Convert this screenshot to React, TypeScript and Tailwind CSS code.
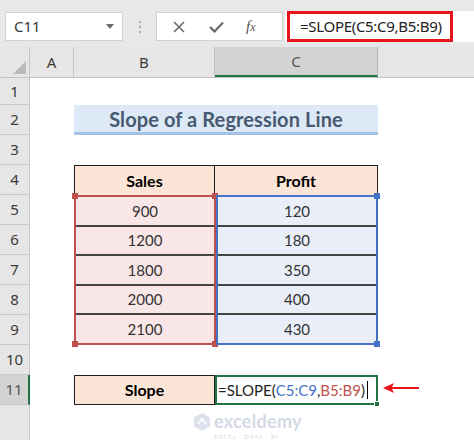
import React from "react";

const rowHeads: { n: string; h: string; sel?: boolean }[] = [
  { n: "1", h: "h-[27px]" },
  { n: "2", h: "h-[30px]" },
  { n: "3", h: "h-[30px]" },
  { n: "4", h: "h-[30px]" },
  { n: "5", h: "h-[30px]" },
  { n: "6", h: "h-[30px]" },
  { n: "7", h: "h-[30px]" },
  { n: "8", h: "h-[30px]" },
  { n: "9", h: "h-[30px]" },
  { n: "10", h: "h-[30px]" },
  { n: "11", h: "h-[30px]", sel: true },
  { n: "", h: "h-[40px]" },
];

const sales = ["900", "1200", "1800", "2000", "2100"];
const profit = ["120", "180", "350", "400", "430"];

function Handle({ pos, color }: { pos: string; color: string }) {
  return <div className={`absolute w-[6px] h-[6px] ${pos} ${color}`} />;
}

export default function App() {
  return (
    <div className="w-[474px] h-[440px] overflow-hidden bg-white font-[Lato,'Noto_Sans',sans-serif] text-[#333]">
      {/* Top formula bar */}
      <div className="h-[47px] bg-[#e8e8e8] flex items-start pt-[12px]">
        <div className="ml-[5px] w-[118px] h-[29px] bg-white border border-[#d2d2d2] flex items-center pl-[8px] pr-[8px]">
          <span className="text-[15px] text-[#3a3a3a] font-['Noto_Sans',sans-serif]">C11</span>
          <div className="ml-auto w-0 h-0 border-l-[4px] border-r-[4px] border-t-[5px] border-l-transparent border-r-transparent border-t-[#6b6b6b]" />
        </div>
        <div className="ml-[16px] mt-[9px] flex flex-col gap-[3px]">
          <div className="w-[2px] h-[2px] bg-[#a9a9a9]" />
          <div className="w-[2px] h-[2px] bg-[#a9a9a9]" />
          <div className="w-[2px] h-[2px] bg-[#a9a9a9]" />
        </div>
        <div className="ml-[15px] w-[127px] h-[29px] bg-white border border-[#d2d2d2] flex items-center">
          <svg className="ml-[16px]" width="12" height="12" viewBox="0 0 12 12">
            <path d="M1 1 L11 11 M11 1 L1 11" stroke="#6a6a6a" strokeWidth="1.6" />
          </svg>
          <svg className="ml-[24px]" width="15" height="12" viewBox="0 0 15 12">
            <path d="M1 6 L5.5 10.5 L14 1.5" stroke="#6a6a6a" strokeWidth="2.2" fill="none" />
          </svg>
          <span className="ml-[22px] text-[15px] italic text-[#555] font-['Liberation_Serif',serif] leading-none">
            f<span className="text-[12px]">x</span>
          </span>
        </div>
        <div className="flex-1 h-[31px] -mt-[1px] ml-[2px] bg-white flex items-center">
          <div className="ml-[2px] w-[166px] h-[31px] border-[3px] border-[#e8141b] flex items-center pl-[10px]">
            <span className="text-[15px] text-[#222] font-['Noto_Sans',sans-serif] tracking-[-0.3px]">
              =SLOPE(C5:C9,B5:B9)
            </span>
          </div>
        </div>
      </div>

      {/* Column headers */}
      <div className="h-[31px] flex bg-[#e6e6e6] border-b border-[#c4c4c4] text-[15px] text-[#3a3a3a] font-['Noto_Sans',sans-serif]">
        <div className="w-[30px] border-r border-[#c4c4c4] flex items-end justify-end p-[3px]">
          <div className="w-0 h-0 border-b-[13px] border-l-[13px] border-b-[#b9b9b9] border-l-transparent" />
        </div>
        <div className="w-[44px] border-r border-[#c4c4c4] flex items-center justify-center">A</div>
        <div className="w-[141px] border-r border-[#c4c4c4] flex items-center justify-center">B</div>
        <div className="w-[163px] bg-[#d3d3d3] border-r border-[#b5b5b5] border-b-2 border-b-[#217346] flex items-center justify-center text-[#555]">
          C
        </div>
        <div className="flex-1" />
      </div>

      <div className="flex">
        {/* Row headers */}
        <div className="w-[30px] flex flex-col text-[15px] text-[#3a3a3a] font-['Noto_Sans',sans-serif]">
          {rowHeads.map((r, i) =>
            r.sel ? (
              <div
                key={i}
                className={`${r.h} bg-[#d3d3d3] border-b border-[#c4c4c4] border-r-2 border-r-[#217346] flex items-center justify-center text-[#555]`}
              >
                {r.n}
              </div>
            ) : (
              <div
                key={i}
                className={`${r.h} bg-[#e6e6e6] border-b border-[#c8c8c8] border-r border-r-[#c4c4c4] flex items-center justify-center`}
              >
                {r.n}
              </div>
            )
          )}
        </div>

        {/* Sheet */}
        <div className="flex-1 flex flex-col">
          <div className="h-[27px]" />
          <div className="h-[30px] flex">
            <div className="w-[44px]" />
            <div className="w-[304px] bg-[#dde9f6] border-b-[3px] border-[#a4c2e2] flex items-center justify-center">
              <span className="text-[20px] font-bold text-[#485a70] tracking-[0.1px]">Slope of a Regression Line</span>
            </div>
          </div>
          <div className="h-[30px]" />
          <div className="h-[30px] flex">
            <div className="w-[44px]" />
            <div className="w-[141px] bg-[#fce4d6] border border-b-0 border-[#1e1e1e] flex items-center justify-center text-[16px] font-bold text-black">
              Sales
            </div>
            <div className="w-[163px] bg-[#fce4d6] border border-l-0 border-b-0 border-[#1e1e1e] flex items-center justify-center text-[16px] font-bold text-black">
              Profit
            </div>
          </div>
          <div className="h-[150px] flex">
            <div className="w-[44px]" />
            <div className="w-[142px] relative border-2 border-[#c0504d] bg-[#f9e6e6] flex flex-col">
              {sales.map((v, i) => (
                <div
                  key={v}
                  className={`flex-1 flex items-center justify-center text-[15px] text-[#333] ${i < 4 ? "border-b-2 border-[#444]" : ""}`}
                >
                  {v}
                </div>
              ))}
              <Handle pos="-left-[4px] -top-[4px]" color="bg-[#c0504d]" />
              <Handle pos="-right-[4px] -top-[4px]" color="bg-[#c0504d]" />
              <Handle pos="-left-[4px] -bottom-[4px]" color="bg-[#c0504d]" />
              <Handle pos="-right-[4px] -bottom-[4px]" color="bg-[#c0504d]" />
            </div>
            <div className="w-[162px] relative border-2 border-[#4472c4] bg-[#e9eef8] flex flex-col">
              {profit.map((v, i) => (
                <div
                  key={v}
                  className={`flex-1 flex items-center justify-center text-[15px] text-[#333] ${i < 4 ? "border-b-2 border-[#444]" : ""}`}
                >
                  {v}
                </div>
              ))}
              <Handle pos="-right-[4px] -top-[4px]" color="bg-[#4472c4]" />
              <Handle pos="-right-[4px] -bottom-[4px]" color="bg-[#4472c4]" />
            </div>
          </div>
          <div className="h-[30px]" />
          <div className="h-[30px] flex items-stretch">
            <div className="w-[44px]" />
            <div className="w-[141px] bg-[#fce4d6] border border-[#1e1e1e] flex items-center justify-center text-[16px] font-bold text-black">
              Slope
            </div>
            <div className="w-[163px] relative border-2 border-[#217346] flex items-center pl-[1px] text-[15px] text-[#222]">
              <span>=SLOPE(</span>
              <span className="text-[#4472c4]">C5:C9</span>
              <span>,</span>
              <span className="text-[#c0504d]">B5:B9</span>
              <span>)</span>
              <div className="ml-[2px] w-[1px] h-[18px] bg-black" />
              <div className="absolute -right-[4px] -bottom-[4px] w-[6px] h-[6px] bg-[#217346] border border-white" />
            </div>
            <div className="flex items-center ml-[5px] -mt-[4px]">
              <svg width="38" height="12" viewBox="0 0 38 12">
                <path d="M0 6 L11 1 L9 5 L36 5 L36 7 L9 7 L11 11 Z" fill="#e8141b" />
              </svg>
            </div>
          </div>
          <div className="flex pl-[163px] pt-[7px]">
            <div className="flex items-start gap-[3px] opacity-60">
              <svg width="18" height="20" viewBox="0 0 18 20">
                <path d="M9 1 L17 5.5 L17 14.5 L9 19 L1 14.5 L1 5.5 Z" fill="#c7d0e0" />
                <path d="M5 12 L9 7 L13 12" stroke="#ffffff" strokeWidth="2" fill="none" />
              </svg>
              <div className="flex flex-col">
                <span className="text-[18px] leading-[19px] font-bold text-[#b7c2d6] tracking-[0.3px]">exceldemy</span>
                <span className="text-[6px] leading-[7px] text-[#b7c2d6] tracking-[1px] mt-[2px]">EXCEL · DATA · BI</span>
              </div>
            </div>
          </div>
        </div>
      </div>
    </div>
  );
}
